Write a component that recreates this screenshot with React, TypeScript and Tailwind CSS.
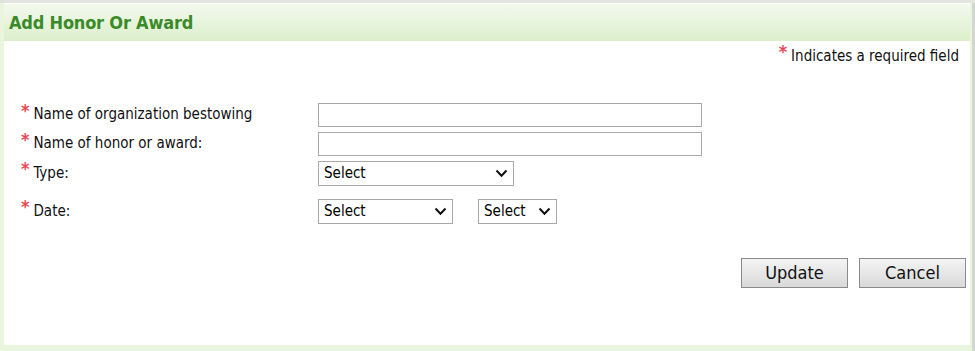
import React from 'react';

const font = { fontFamily: '"DejaVu Sans Condensed", "DejaVu Sans", Verdana, sans-serif' };

function Star() {
    return <span className="text-[#e84a55] text-[18px] font-bold leading-none mr-[4px] relative -top-[4px]">*</span>;
}

function Chevron() {
    return (
        <svg width="13" height="9" viewBox="0 0 13 9" className="shrink-0">
            <path d="M1.5 1.5 L6.5 6.8 L11.5 1.5" fill="none" stroke="#111" strokeWidth="2" />
        </svg>
    );
}

function FakeSelect({ width }: { width: string }) {
    return (
        <div className={`${width} h-[25px] border border-[#a9a9a9] bg-white flex items-center justify-between pl-[5px] pr-[5px] text-[15px] text-black`}>
            <span>Select</span>
            <Chevron />
        </div>
    );
}

function Label({ text }: { text: string }) {
    return (
        <div className="w-[314px] flex items-center text-[15px] text-[#111] pl-[17px]">
            <Star />
            <span>{text}</span>
        </div>
    );
}

export default function App() {
    return (
        <div style={font} className="w-[975px] h-[351px] bg-white border-t-[3px] border-[#e2e4e0] flex">
            <div className="flex-1 flex flex-col border-l-[4px] border-b-[6px] border-[#eaf5de]">
                <div className="h-[37px] mt-[1px] flex items-center pl-[5px] bg-gradient-to-b from-[#f3f9ee] to-[#dcefcc]">
                    <h2 className="text-[18px] font-bold text-[#3a8a2a] tracking-[-0.2px]">Add Honor Or Award</h2>
                </div>
                <div className="flex-1 flex flex-col">
                    <div className="flex justify-end items-center pr-[11px] pt-[4px] text-[15px] text-[#111]">
                        <Star />
                        <span>Indicates a required field</span>
                    </div>
                    <div className="flex flex-col mt-[35px] gap-[5px]">
                        <div className="flex items-center h-[24px]">
                            <Label text="Name of organization bestowing" />
                            <div className="w-[384px] h-[24px] border border-[#a9a9a9] bg-white" />
                        </div>
                        <div className="flex items-center h-[24px]">
                            <Label text="Name of honor or award:" />
                            <div className="w-[384px] h-[24px] border border-[#a9a9a9] bg-white" />
                        </div>
                        <div className="flex items-center h-[25px]">
                            <Label text="Type:" />
                            <FakeSelect width="w-[196px]" />
                        </div>
                        <div className="flex items-center h-[25px] mt-[8px]">
                            <Label text="Date:" />
                            <FakeSelect width="w-[135px]" />
                            <div className="w-[25px]" />
                            <FakeSelect width="w-[79px]" />
                        </div>
                    </div>
                    <div className="flex justify-end gap-[11px] pr-[4px] mt-[34px]">
                        <button className="w-[107px] h-[30px] border border-[#8a8a8a] bg-gradient-to-b from-[#f4f4f4] to-[#d9d9d9] text-[18px] text-[#111]">Update</button>
                        <button className="w-[107px] h-[30px] border border-[#8a8a8a] bg-gradient-to-b from-[#f4f4f4] to-[#d9d9d9] text-[18px] text-[#111]">Cancel</button>
                    </div>
                </div>
            </div>
            <div className="w-[5px] flex">
                <div className="w-[2px] bg-[#eaf5de]" />
                <div className="w-[3px] bg-[#d4d6d2]" />
            </div>
        </div>
    );
}
